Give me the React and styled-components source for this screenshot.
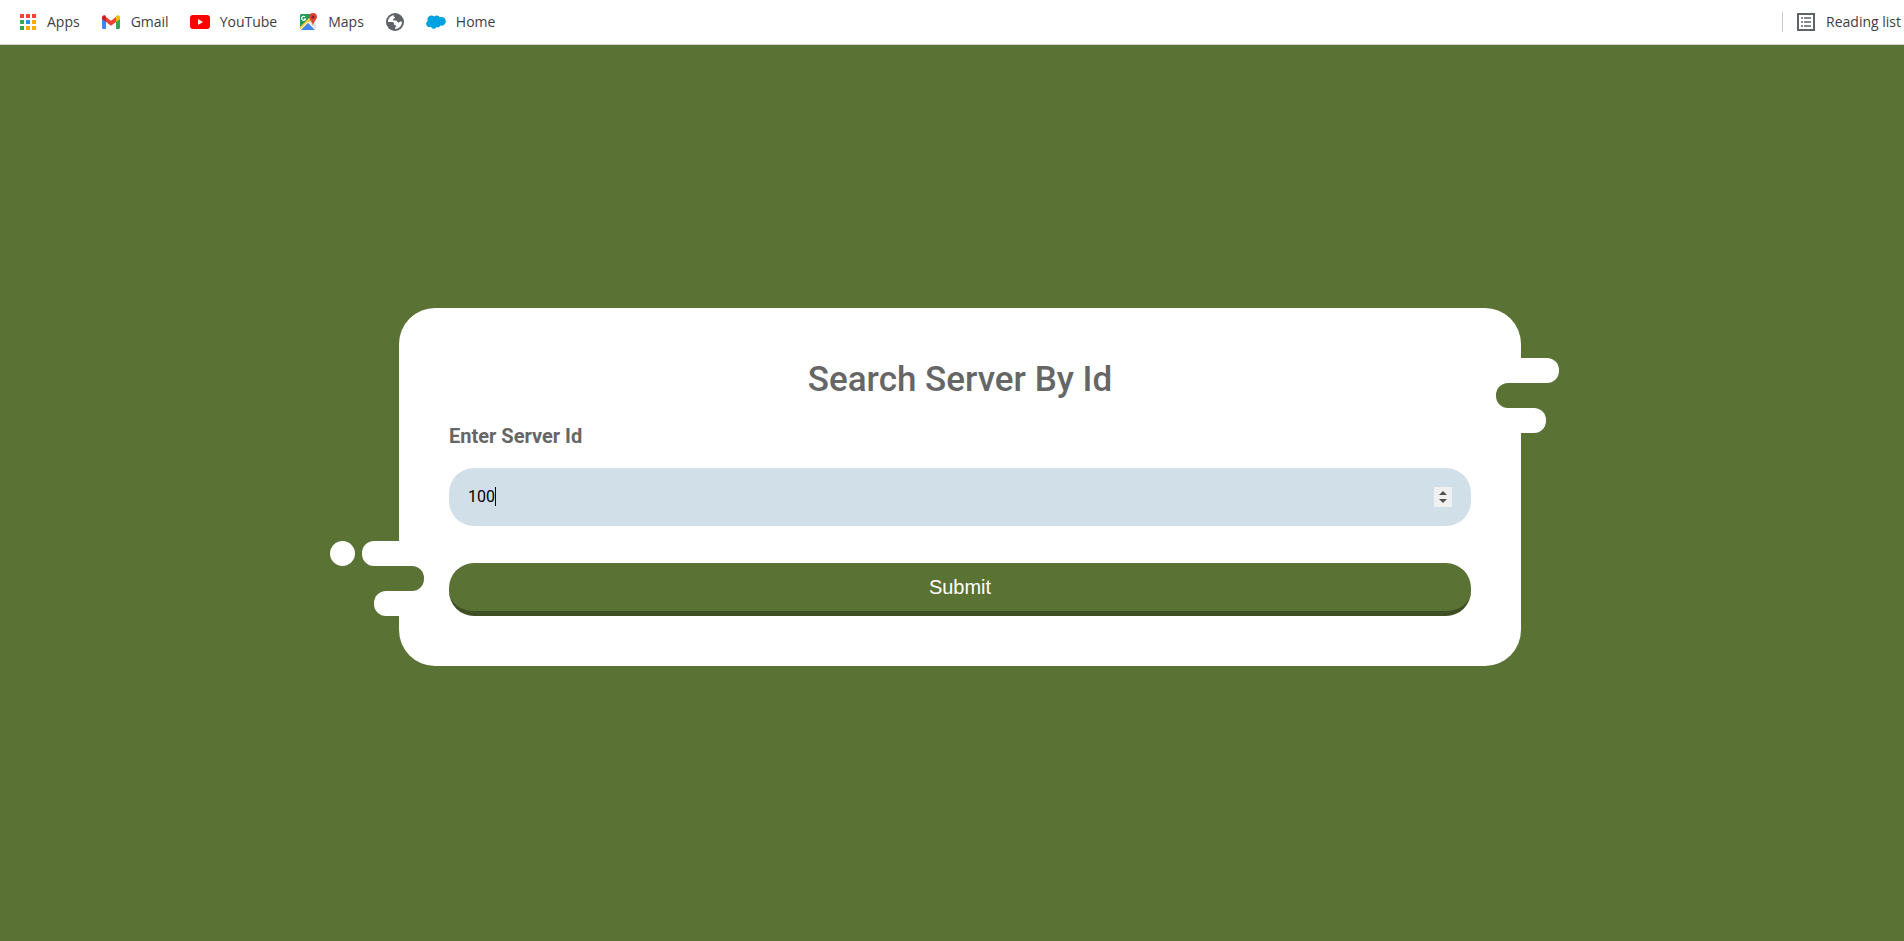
import React, { useState } from "react";
import styled, { createGlobalStyle } from "styled-components";

const green = "#5a7233";

const GlobalStyle = createGlobalStyle`
  *, *::before, *::after { box-sizing: border-box; }
  body {
    margin: 0;
    background: ${green};
    font-family: Roboto, "Liberation Sans", sans-serif;
  }
`;

const Page = styled.div`
  display: flex;
  flex-direction: column;
  min-height: 100vh;
`;

const BookmarkBar = styled.nav`
  display: flex;
  align-items: center;
  gap: 21px;
  height: 45px;
  padding: 0 3px 1px 17px;
  background: #fff;
  border-bottom: 1px solid #d3d5d8;
`;

const Bookmark = styled.a`
  display: flex;
  align-items: center;
  gap: 10px;
  color: #3c4043;
  font: 14px/20px "Open Sans", "Noto Sans", sans-serif;
  text-decoration: none;
  white-space: nowrap;

  svg {
    display: block;
    flex: none;
  }
`;

const ReadingList = styled.div`
  display: flex;
  align-items: center;
  height: 20px;
  margin-left: auto;
  padding-left: 13px;
  border-left: 1px solid #c8cacd;
`;

const Main = styled.main`
  flex: 1;
  display: flex;
  align-items: center;
  justify-content: center;
  padding: 0 0 12px 16px;
`;

const Card = styled.form`
  position: relative;
  display: flex;
  flex-direction: column;
  width: 100%;
  max-width: 1122px;
  padding: 50px;
  border-radius: 36px;
  background: #fff;
  color: #666;
`;

const Title = styled.h1`
  margin: 0 0 20px;
  font-size: 35px;
  font-weight: 500;
  line-height: 44px;
  text-align: center;
`;

const Label = styled.label`
  margin-bottom: 18px;
  font-size: 20px;
  font-weight: 700;
  line-height: 28px;
`;

const Field = styled.div`
  position: relative;
  display: flex;
  align-items: center;
  height: 58px;
  margin-bottom: 37px;
  padding: 0 19px;
  border-radius: 25px;
  background: #d1dfe8;
  color: #000;
  font: 16px/20px Roboto, sans-serif;
`;

const NumberInput = styled.input`
  flex: 1;
  min-width: 0;
  height: 100%;
  padding: 0 0 2px;
  border: 0;
  outline: 0;
  background: transparent;
  color: inherit;
  font: inherit;
  caret-color: transparent;
  appearance: textfield;

  &::-webkit-inner-spin-button {
    display: none;
  }
`;

const Caret = styled.span`
  position: absolute;
  top: 19px;
  width: 1px;
  height: 19px;
  background: #000;
  pointer-events: none;
`;

const Spinner = styled.div`
  display: flex;
  flex-direction: column;
  width: 18px;
  background: #f0f0f0;
`;

const StepButton = styled.button`
  display: flex;
  justify-content: center;
  align-items: ${(p) => (p.$up ? "flex-end" : "flex-start")};
  height: 10px;
  padding: 2px 0;
  border: 0;
  background: none;
  color: #505050;
`;

const Submit = styled.button`
  height: 53px;
  padding: 0;
  border: 0;
  border-bottom: 5px solid #3d4f23;
  border-radius: 25px;
  background: ${green};
  color: #fff;
  font: 20px/24px "Liberation Sans", Arial, sans-serif;
  cursor: pointer;
`;

const Splash = styled.div`
  position: absolute;
  display: flex;
  flex-direction: column;
  ${(p) => (p.$side === "left"
    ? "left: -69px; bottom: 50px; align-items: flex-start;"
    : "right: -38px; top: 50px; align-items: flex-end;")}
`;

const Strip = styled.div`
  display: flex;
  gap: 7px;
  padding: ${(p) => p.$inset || "0"};
`;

const Pill = styled.span`
  width: ${(p) => p.$width}px;
  height: 25px;
  border-radius: ${(p) => p.$round};
  background: ${(p) => (p.$cut ? green : "#fff")};
`;

const AppsIcon = () => (
  <svg width="20" height="20" viewBox="0 0 20 20" aria-hidden="true">
    {[
      ["#f44336", "#f44336", "#f44336"],
      ["#34a853", "#1e90ff", "#f9ab00"],
      ["#34a853", "#f9ab00", "#f9ab00"],
    ].map((row, y) => row.map((fill, x) => (
      <rect key={`${x}${y}`} x={3 + x * 6} y={2 + y * 6} width="4" height="4" fill={fill} />
    )))}
  </svg>
);

const GmailIcon = () => (
  <svg width="20" height="20" viewBox="0 0 20 20" aria-hidden="true">
    <path fill="#4285f4" d="M1 6v9.500c0 .8.500 1.500 1.300 1.500H5V9z" />
    <path fill="#34a853" d="M15 9v8h2.700c.8 0 1.300-.7 1.300-1.500V6z" />
    <path fill="#fbbc04" d="M15 5v5l4-3V5.500c0-2-2.300-2.800-3.600-1.700z" />
    <path fill="#ea4335" d="M5 10V5l5 3.700L15 5v5l-5 3.800z" />
    <path fill="#c5221f" d="M1 5.500V7l4 3V5l-.4-1.200C3.300 2.700 1 3.500 1 5.500z" />
  </svg>
);

const YouTubeIcon = () => (
  <svg width="20" height="20" viewBox="0 0 20 20" aria-hidden="true">
    <rect y="3" width="20" height="14" rx="3" fill="#f00" />
    <path d="M8 7v6l5-3z" fill="#fff" />
  </svg>
);

const MapsIcon = () => (
  <svg width="20" height="20" viewBox="0 0 20 20" aria-hidden="true">
    <path fill="#1e9d58" d="M3 2h12L2 17V4q0-2 1-2z" />
    <path fill="#ffcd40" d="m2 15 9-9 3 4-7 8H3q-1 0-1-1z" />
    <path fill="#dfe3e6" d="m10 11 4-3 4 4v5l-1 1z" />
    <path fill="#4285f4" d="m10 11 7 7H3z" />
    <path stroke="#fff" fill="none" d="m2 18 8-8 8 8" />
    <path stroke="#fff" fill="none" strokeWidth="1.200" d="M7 4.800A2 2 0 1 0 7.500 7H5.800" />
    <path fill="#db4437" d="M15 1a4 4 0 0 0-4 4c0 3 3.500 4 4 9 .5-5 4-6 4-9a4 4 0 0 0-4-4z" />
    <circle cx="15" cy="5" r="1.500" fill="#7b231c" />
  </svg>
);

const GlobeIcon = () => (
  <svg width="20" height="20" viewBox="0 0 20 20" aria-hidden="true">
    <circle cx="10" cy="10" r="9" fill="#5f6368" />
    <path fill="#fff" d="M10 3c-2 .1-1.500 1.700-.4 1.900.8.200.5 1.400-.6 1.700-1.200.3-1 1.400-.3 1.800H11c1 0 1 1 1.400 1.600.6.800 2.200.5 2.600-.2.400-.8 1-.7 2 .2-.1 4-3.200 6.900-6.700 7-.5-.5-.2-1.700.6-2 .7-.4.5-1.600-.5-1.700-1 0-1.300-.7-1.300-1.500 0-1-1-1.700-2.100-1.700L3 10c0-4 3.200-7 7-7z" />
  </svg>
);

const CloudIcon = () => (
  <svg width="20" height="20" viewBox="0 0 20 20" aria-hidden="true">
    <path fill="#00a1e0" d="M8.300 4.500a3.600 3.600 0 0 1 5.500.8c3-1.300 6 .8 6 3.900 0 3-2.800 5-5.300 4.400a3 3 0 0 1-4 1.400c-1 2.400-4.600 2.400-5.500-.3A3.300 3.300 0 0 1 1.700 9C.1 5.500 4.500 1.700 8.300 4.500z" />
  </svg>
);

const ListIcon = () => (
  <svg width="20" height="20" viewBox="0 0 20 20" fill="none" stroke="#5f6368" aria-hidden="true">
    <rect x="2" y="2" width="16" height="16" strokeWidth="2" />
    <path strokeWidth="1.500" d="M5 6h2m1 0h7M5 10h2m1 0h7M5 14h2m1 0h7" />
  </svg>
);

const Arrow = ({ d }) => (
  <svg width="8" height="4" viewBox="0 0 8 4" fill="currentColor" aria-hidden="true">
    <path d={d} />
  </svg>
);

const bookmarks = [
  { label: "Apps", Icon: AppsIcon },
  { label: "Gmail", Icon: GmailIcon },
  { label: "YouTube", Icon: YouTubeIcon },
  { label: "Maps", Icon: MapsIcon },
  { label: "", Icon: GlobeIcon },
  { label: "Home", Icon: CloudIcon },
];

export default function App() {
  const [serverId, setServerId] = useState("100");
  const step = (by) => setServerId(String(Number(serverId) + by));
  return (
    <Page>
      <GlobalStyle />
      <BookmarkBar>
        {bookmarks.map(({ label, Icon }) => (
          <Bookmark key={label} href="#">
            <Icon />
            {label}
          </Bookmark>
        ))}
        <ReadingList>
          <Bookmark href="#">
            <ListIcon />
            Reading list
          </Bookmark>
        </ReadingList>
      </BookmarkBar>
      <Main>
        <Card onSubmit={(e) => e.preventDefault()}>
          <Splash $side="right">
            <Pill $width={38} $round="0 12px 12px 0" />
            <Pill $width={63} $cut $round="12px 0 0 12px" />
            <Strip $inset="0 13px 0 0">
              <Pill $width={25} $round="0 12px 12px 0" />
            </Strip>
          </Splash>
          <Splash $side="left">
            <Strip>
              <Pill $width={25} $round="50%" />
              <Pill $width={37} $round="12px 0 0 12px" />
            </Strip>
            <Pill $width={94} $cut $round="0 12px 12px 0" />
            <Strip $inset="0 0 0 44px">
              <Pill $width={25} $round="12px 0 0 12px" />
            </Strip>
          </Splash>
          <Title>Search Server By Id</Title>
          <Label htmlFor="server-id">Enter Server Id</Label>
          <Field>
            <NumberInput
              id="server-id"
              type="number"
              autoFocus
              value={serverId}
              onChange={(e) => setServerId(e.target.value)}
            />
            <Caret style={{ left: `calc(19px + ${serverId.length}ch)` }} />
            <Spinner>
              <StepButton type="button" $up aria-label="Increase" onClick={() => step(1)}>
                <Arrow d="M0 4 4 0l4 4z" />
              </StepButton>
              <StepButton type="button" aria-label="Decrease" onClick={() => step(-1)}>
                <Arrow d="M0 0h8L4 4z" />
              </StepButton>
            </Spinner>
          </Field>
          <Submit type="submit">Submit</Submit>
        </Card>
      </Main>
    </Page>
  );
}
